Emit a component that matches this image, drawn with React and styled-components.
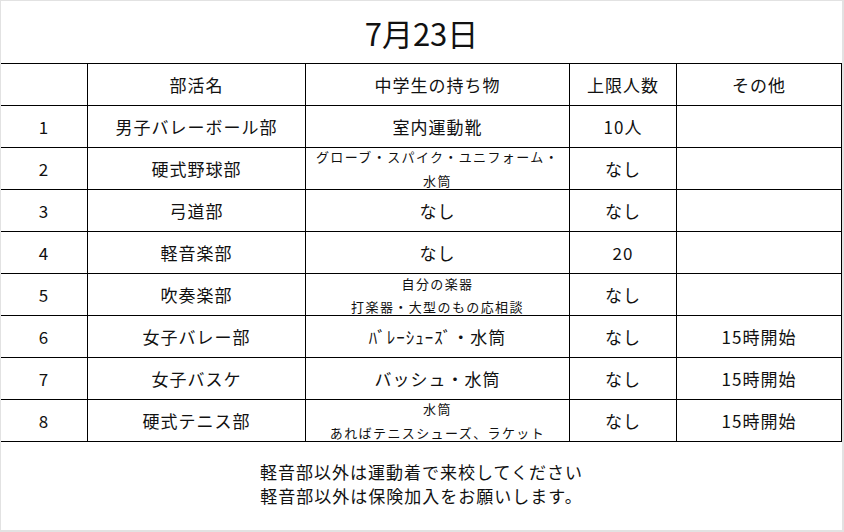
import React from "react";
import styled, { createGlobalStyle } from "styled-components";

const Global = createGlobalStyle`
  html, body { margin: 0; padding: 0; background: #ffffff; }
  body { font-family: "Noto Sans CJK JP", "Noto Sans", sans-serif; color: #111; }
  * { box-sizing: border-box; }
`;

const Page = styled.div`
  width: 844px;
  height: 532px;
  background: #fff;
  border-top: 1px solid #e2e2e2;
  border-left: 1px solid #e2e2e2;
  border-right: 2px solid #e2e2e2;
  border-bottom: 2px solid #e2e2e2;
  display: flex;
  flex-direction: column;
`;

const Title = styled.h1`
  margin: 0;
  height: 62px;
  display: flex;
  align-items: center;
  justify-content: center;
  font-size: 31px;
  font-weight: 400;
  color: #111;
`;

const Grid = styled.div`
  display: grid;
  grid-template-columns: 87px 218px 264px 107px 165px;
  grid-auto-rows: 42px;
  border-top: 1px solid #000;
`;

const Cell = styled.div`
  border-right: 1px solid #000;
  border-bottom: 1px solid #000;
  display: flex;
  flex-direction: column;
  align-items: center;
  justify-content: center;
  text-align: center;
  font-size: 17px;
  letter-spacing: 1px;
  line-height: 20px;
  white-space: nowrap;
`;

const SmallLines = styled.div`
  font-size: 13px;
  letter-spacing: 1.4px;
  line-height: ${({ $lh }) => $lh}px;
  text-align: center;
`;

const Footer = styled.div`
  flex: 1;
  padding-top: 18px;
  display: flex;
  flex-direction: column;
  align-items: center;
  font-size: 17px;
  letter-spacing: 1px;
  line-height: 24px;
`;

const headers = ["", "部活名", "中学生の持ち物", "上限人数", "その他"];

const rows = [
  ["1", "男子バレーボール部", "室内運動靴", "10人", ""],
  ["2", "硬式野球部", { lines: ["グローブ・スパイク・ユニフォーム・", "水筒"], lh: 24 }, "なし", ""],
  ["3", "弓道部", "なし", "なし", ""],
  ["4", "軽音楽部", "なし", "20", ""],
  ["5", "吹奏楽部", { lines: ["自分の楽器", "打楽器・大型のもの応相談"], lh: 23 }, "なし", ""],
  ["6", "女子バレー部", "ﾊﾞﾚｰｼｭｰｽﾞ・水筒", "なし", "15時開始"],
  ["7", "女子バスケ", "バッシュ・水筒", "なし", "15時開始"],
  ["8", "硬式テニス部", { lines: ["水筒", "あればテニスシューズ、ラケット"], lh: 24 }, "なし", "15時開始"],
];

export default function App() {
  return (
    <>
      <Global />
      <Page>
        <Title>7月23日</Title>
        <Grid>
          {headers.map((h, i) => (
            <Cell key={"h" + i}>{h}</Cell>
          ))}
          {rows.map((r, ri) =>
            r.map((c, ci) => (
              <Cell key={ri + "-" + ci}>
                {typeof c === "object" ? (
                  <SmallLines $lh={c.lh}>
                    {c.lines.map((l, li) => (
                      <div key={li}>{l}</div>
                    ))}
                  </SmallLines>
                ) : (
                  c
                )}
              </Cell>
            ))
          )}
        </Grid>
        <Footer>
          <div>軽音部以外は運動着で来校してください</div>
          <div>軽音部以外は保険加入をお願いします。</div>
        </Footer>
      </Page>
    </>
  );
}
